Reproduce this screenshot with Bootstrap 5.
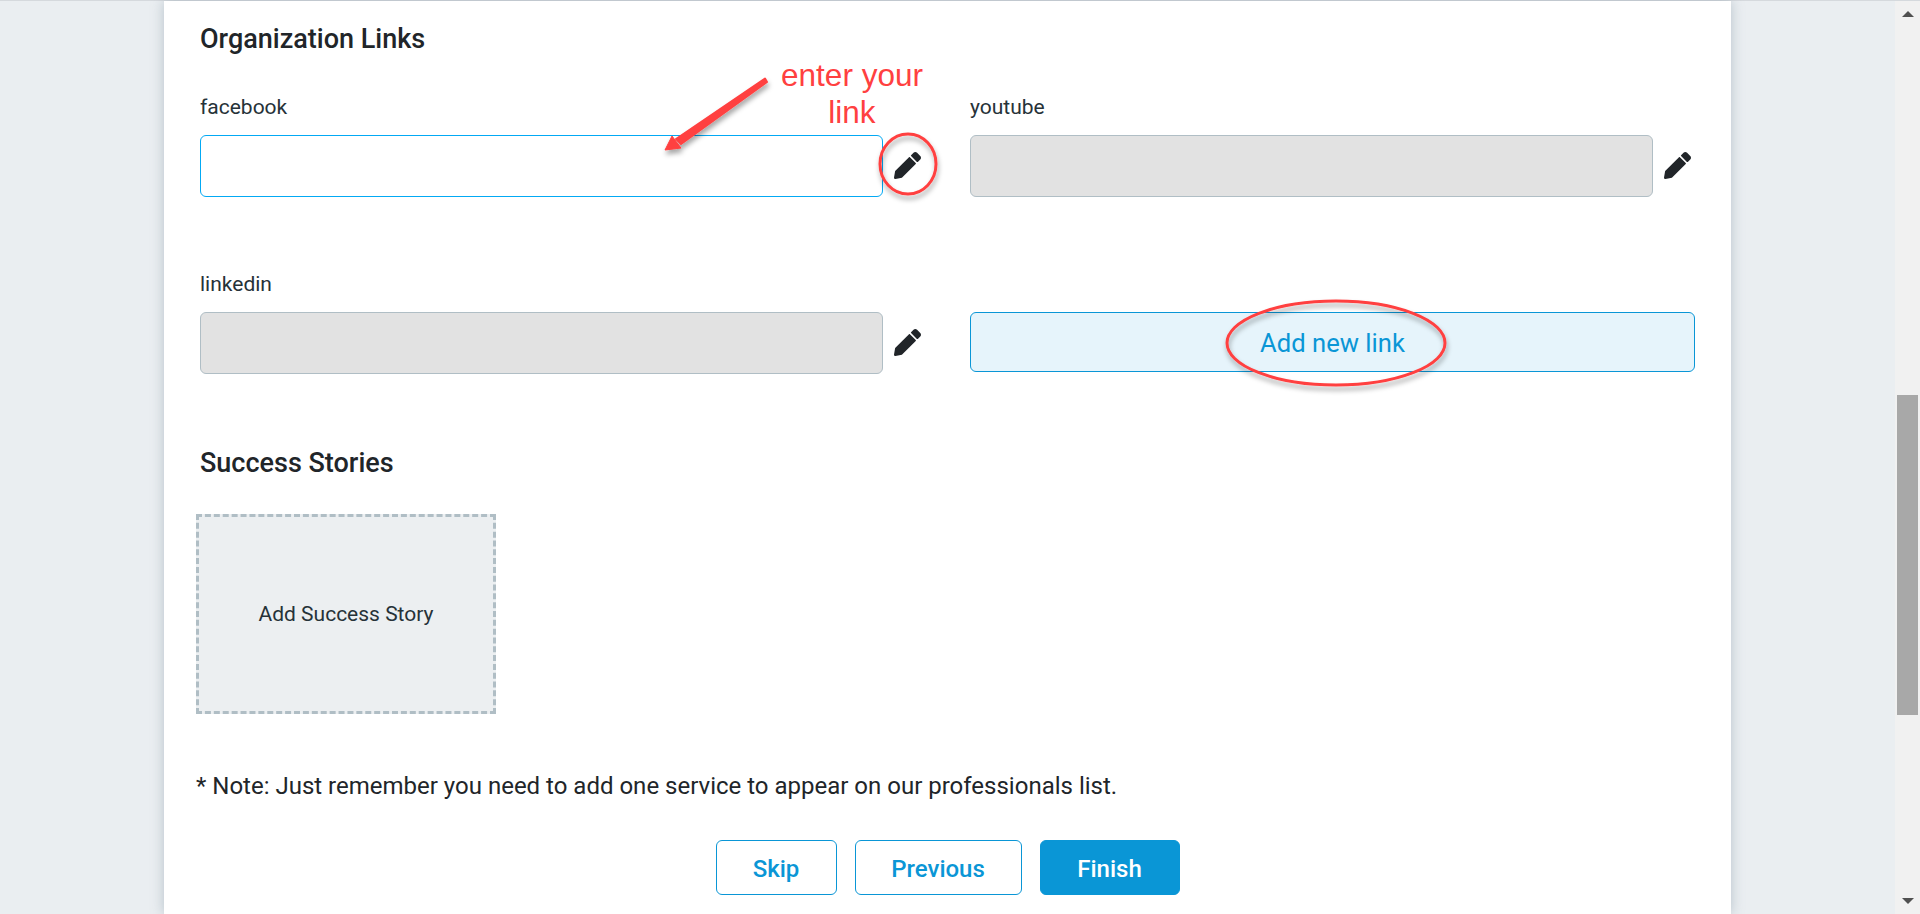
<!DOCTYPE html>
<html lang="en">
<head>
  <meta charset="UTF-8">
  <meta name="viewport" content="width=device-width, initial-scale=1.0">
  <title>Organization Links</title>
  <link rel="stylesheet" href="https://cdn.jsdelivr.net/npm/bootstrap@5.3.0/dist/css/bootstrap.min.css">
  <style>
    html, body { height: 914px; overflow: hidden; }
    body { font-family: Roboto, sans-serif; color: #212529; background: #eaeef1; }
    .page-shell { height: 914px; border-top: 1px solid #d5d9dd; }
    .page-area { width: 1895px; }
    .sheet {
      position: relative;
      width: 1567px;
      height: 913px;
      background: #fff;
      box-shadow: 0 0 12px rgba(120, 140, 155, .45);
      padding: 23px 36px 0;
    }
    .sheet-title { font-size: 27px; font-weight: 500; line-height: 30px; margin: 0; color: #212529; }
    .links-row { --bs-gutter-x: 45px; --bs-gutter-y: 0; margin-top: 39px; }
    .links-row + .links-row { margin-top: 0; }
    .link-cell { height: 177px; }
    .link-label { font-size: 21px; line-height: 28px; margin: 0 0 14px; display: block; color: #263238; }
    .link-input {
      height: 62px;
      width: 683px;
      flex: none;
      background: #e2e2e2;
      border: 1px solid #b0bec5;
      border-radius: 6px;
      padding: 0 12px;
    }
    .link-input:disabled { background: #e2e2e2; border-color: #b0bec5; }
    .link-input.is-active { background: #fff; border-color: #03a9f4; }
    .pencil { width: 27px; height: 27px; margin: 0 0 2px 11px; fill: #212529; flex: none; }
    .add-link {
      margin-top: 42px;
      width: 100%;
      height: 60px;
      background: #e6f4fb;
      border: 1px solid #0a96d6;
      border-radius: 6px;
      color: #0a96d6;
      font-size: 25.6px;
      padding: 2px 0 0;
    }
    .add-link:hover { background: #e6f4fb; color: #0a96d6; border-color: #0a96d6; }
    .stories-title { margin-top: 1px; }
    .story-box {
      width: 300px;
      height: 200px;
      margin: 36px 0 0 -4px;
      padding-top: 2px;
      background: #eceff1;
      border: 3px dashed #b0bec5;
      font-size: 21px;
      color: #263238;
    }
    .note-line { font-size: 24px; line-height: 30px; margin: 57px 0 0 -4px; color: #212529; }
    .step-btn {
      height: 55px;
      font-size: 24px;
      font-weight: 500;
      border-radius: 6px;
      border: 1px solid #0a96d6;
      color: #0a96d6;
      background: #fff;
      padding: 2px 0 0;
    }
    .step-btn.is-main { background: #0a96d6; color: #fff; }
    .btn-skip { width: 121px; }
    .btn-prev { width: 167px; }
    .btn-finish { width: 140px; }
    .step-row { margin-top: 39px; gap: 18px; }
    .note-mark { position: absolute; left: 0; top: 0; width: 1567px; height: 913px; pointer-events: none; overflow: visible; }
    .note-text {
      position: absolute;
      left: 598px;
      top: 56px;
      width: 180px;
      text-align: center;
      font-family: "Liberation Sans", Arial, sans-serif;
      font-size: 31.5px;
      line-height: 37px;
      color: #ff4040;
    }
    .fake-scroll { width: 25px; height: 913px; background: #f1f1f1; position: relative; }
    .fake-thumb { position: absolute; left: 2px; top: 394px; width: 21px; height: 320px; background: #a8a8a8; }
    .arrow-up, .arrow-down {
      position: absolute;
      left: 7px;
      width: 0;
      height: 0;
      border-left: 6px solid transparent;
      border-right: 6px solid transparent;
    }
    .arrow-up { top: 10px; border-bottom: 6px solid #505050; }
    .arrow-down { bottom: 10px; border-top: 6px solid #505050; }
  </style>
</head>
<body>
  <svg width="0" height="0" class="d-block">
    <defs>
      <symbol id="pencil-icon" viewBox="0 0 512 512">
        <path d="M497.9 142.1l-46.1 46.1c-4.7 4.7-12.3 4.7-17 0l-111-111c-4.7-4.7-4.7-12.3 0-17l46.1-46.1c18.7-18.7 49.1-18.7 67.9 0l60.1 60.1c18.8 18.7 18.8 49.1 0 67.9z"/>
        <path d="M284.2 99.8L21.6 362.4.4 483.9c-2.9 16.4 11.4 30.6 27.8 27.8l121.5-21.3 262.6-262.6c4.7-4.7 4.7-12.3 0-17l-111-111c-4.8-4.7-12.4-4.7-17.1 0z"/>
      </symbol>
      <filter id="mark-shadow" x="-20%" y="-20%" width="140%" height="140%">
        <feDropShadow dx="1" dy="4" stdDeviation="2.5" flood-color="#000" flood-opacity=".35"/>
      </filter>
    </defs>
  </svg>

  <div class="page-shell d-flex">
    <div class="page-area">
      <div class="sheet mx-auto">
        <h2 class="sheet-title">Organization Links</h2>

        <div class="row links-row">
          <div class="col-6 link-cell">
            <label class="link-label">facebook</label>
            <div class="d-flex align-items-center">
              <input class="link-input is-active" type="text">
              <svg class="pencil"><use href="#pencil-icon"/></svg>
            </div>
          </div>
          <div class="col-6 link-cell">
            <label class="link-label">youtube</label>
            <div class="d-flex align-items-center">
              <input class="link-input" type="text" disabled>
              <svg class="pencil"><use href="#pencil-icon"/></svg>
            </div>
          </div>
        </div>

        <div class="row links-row">
          <div class="col-6 link-cell">
            <label class="link-label">linkedin</label>
            <div class="d-flex align-items-center">
              <input class="link-input" type="text" disabled>
              <svg class="pencil"><use href="#pencil-icon"/></svg>
            </div>
          </div>
          <div class="col-6 link-cell">
            <button class="btn add-link" type="button">Add new link</button>
          </div>
        </div>

        <h2 class="sheet-title stories-title">Success Stories</h2>
        <div class="story-box d-flex align-items-center justify-content-center">Add Success Story</div>

        <p class="note-line">* Note: Just remember you need to add one service to appear on our professionals list.</p>

        <div class="d-flex justify-content-center step-row">
          <button class="btn step-btn btn-skip" type="button">Skip</button>
          <button class="btn step-btn btn-prev" type="button">Previous</button>
          <button class="btn step-btn is-main btn-finish" type="button">Finish</button>
        </div>

        <!-- red markup drawn over the form -->
        <div class="note-text">enter your<br>link</div>
        <svg class="note-mark" viewBox="0 0 1567 913">
          <g filter="url(#mark-shadow)">
            <path d="M601 77.5 L603 81 L517 143 L512 138 Z" fill="#ff4040" stroke="#ff4040" stroke-width="2" stroke-linejoin="round"/>
            <path d="M501 149 L508 135 L517 147 Z" fill="#ff4040" stroke="#ff4040" stroke-width="1" stroke-linejoin="round"/>
            <ellipse cx="744" cy="163" rx="28" ry="30" fill="none" stroke="#ff4040" stroke-width="3"/>
            <ellipse cx="1172" cy="342" rx="109" ry="42" fill="none" stroke="#ff4040" stroke-width="3"/>
          </g>
        </svg>
      </div>
    </div>
    <div class="fake-scroll">
      <div class="arrow-up"></div>
      <div class="fake-thumb"></div>
      <div class="arrow-down"></div>
    </div>
  </div>
</body>
</html>
